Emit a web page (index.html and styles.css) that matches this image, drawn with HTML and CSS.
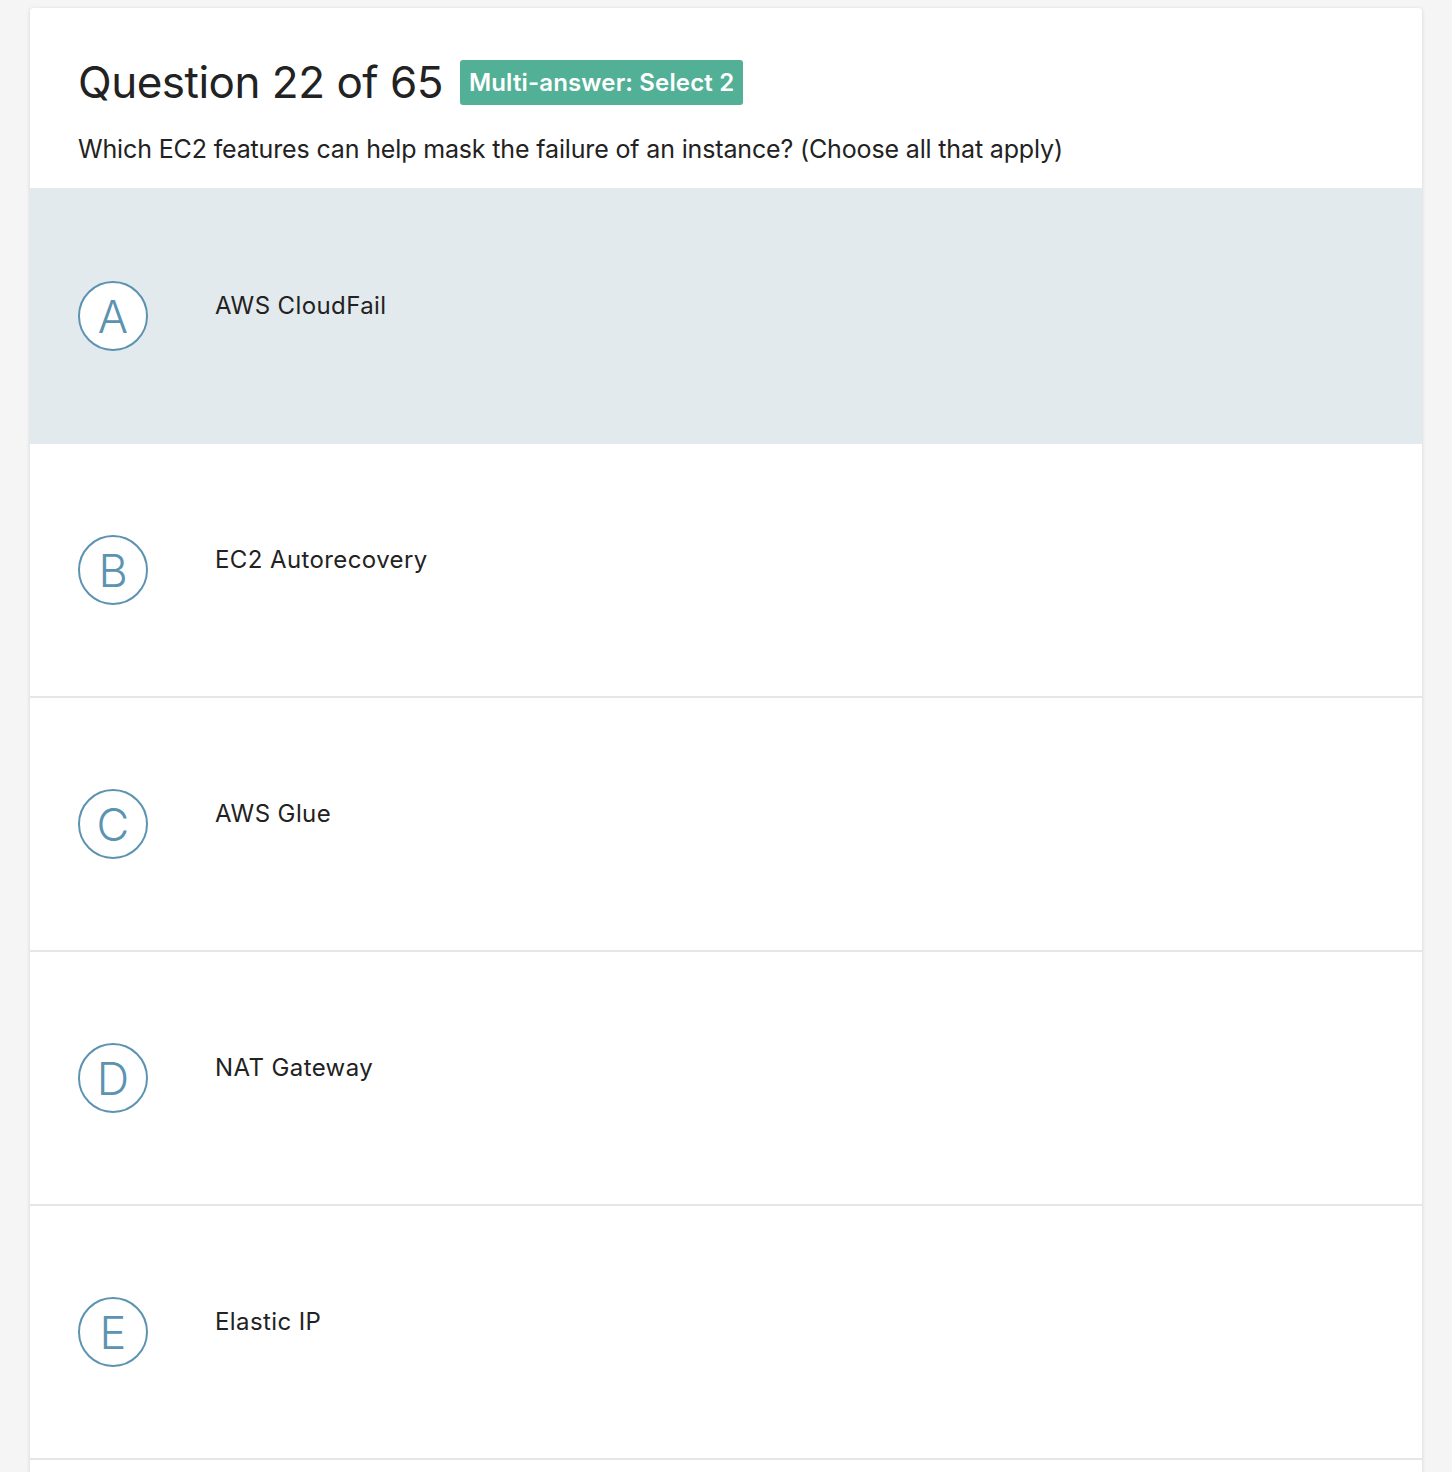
FILE: index.html
```html
<!DOCTYPE html>
<html lang="en">
<head>
<meta charset="utf-8">
<title>Question 22 of 65</title>
<link rel="stylesheet" href="styles.css">
</head>
<body>
<main class="card">
  <header class="q-header">
    <div class="q-title-row">
      <h1 class="q-title">Question 22 of 65</h1>
      <span class="q-badge">Multi-answer: Select 2</span>
    </div>
    <p class="q-text">Which EC2 features can help mask the failure of an instance? (Choose all that apply)</p>
  </header>
  <ul class="options">
    <li class="option option-active"><span class="opt-letter">A</span><span class="opt-text">AWS CloudFail</span></li>
    <li class="option"><span class="opt-letter">B</span><span class="opt-text">EC2 Autorecovery</span></li>
    <li class="option"><span class="opt-letter">C</span><span class="opt-text">AWS Glue</span></li>
    <li class="option"><span class="opt-letter">D</span><span class="opt-text">NAT Gateway</span></li>
    <li class="option"><span class="opt-letter">E</span><span class="opt-text">Elastic IP</span></li>
  </ul>
  <div class="card-foot"></div>
</main>
</body>
</html>
```

FILE: styles.css
```css
html, body {
  margin: 0;
  padding: 0;
  background: #f5f5f5;
}
body {
  padding: 8px 30px 0 30px;
  font-family: "Inter", "Lato", "Liberation Sans", sans-serif;
  color: #222;
}
.card {
  background: #fff;
  border-radius: 4px 4px 0 0;
  box-shadow: 0 1px 4px rgba(0, 0, 0, 0.14);
  overflow: hidden;
}
.q-header {
  padding: 48px 48px 24px 48px;
}
.q-title-row {
  display: flex;
  align-items: center;
  gap: 17px;
  height: 52px;
}
.q-title {
  margin: 0;
  font-size: 44px;
  line-height: 52px;
  font-weight: 400;
  letter-spacing: -0.5px;
  color: #222;
}
.q-badge {
  display: inline-flex;
  align-items: center;
  height: 45px;
  padding: 0 9px;
  background: #52b096;
  color: #fff;
  border-radius: 3px;
  font-size: 24px;
  font-weight: 600;
  letter-spacing: 0.15px;
  box-sizing: border-box;
}
.q-text {
  margin: 26px 0 0 0;
  font-size: 25px;
  line-height: 30px;
  letter-spacing: -0.15px;
  color: #222;
}
.options {
  list-style: none;
  margin: 0;
  padding: 0;
}
.option {
  display: flex;
  align-items: center;
  gap: 67px;
  height: 252px;
  padding: 0 48px;
  border-bottom: 2px solid #e6e6e6;
}
.option-active {
  background: #e3eaed;
  border-top: 2px solid #e3eaed;
  border-bottom-color: #e3eaed;
}
.opt-letter {
  flex: 0 0 auto;
  width: 70px;
  height: 70px;
  box-sizing: border-box;
  border: 2px solid #5b93b1;
  border-radius: 50%;
  background: #fff;
  color: #5b93b1;
  display: flex;
  align-items: center;
  justify-content: center;
  font-size: 45px;
  font-weight: 300;
  line-height: 1;
}
.opt-text {
  font-size: 24px;
  line-height: 30px;
  margin-bottom: 20px;
  letter-spacing: 0.4px;
  color: #222;
}
.card-foot {
  height: 40px;
}
```
